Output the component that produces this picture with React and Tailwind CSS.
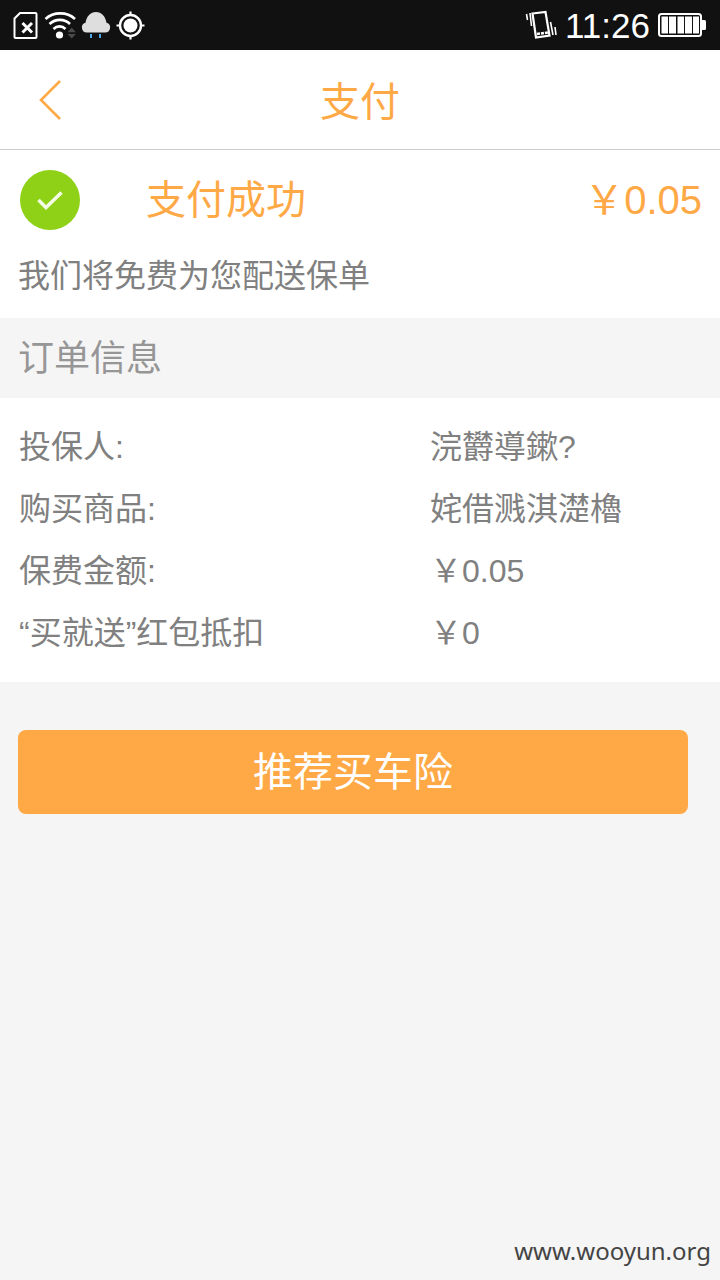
import React from "react";

function SimIcon() {
  return (
    <svg width="26" height="30" viewBox="0 0 26 30" fill="none">
      <path d="M8 3H23.500a1 1 0 0 1 1 1V27a1 1 0 0 1-1 1H3.500a1 1 0 0 1-1-1V8.500Z" stroke="#fff" strokeWidth="2" />
      <path d="M10.500 13l9.500 9.500M20 13l-9.500 9.500" stroke="#fff" strokeWidth="3" />
    </svg>
  );
}

function WifiIcon() {
  return (
    <svg width="34" height="30" viewBox="0 0 34 30" fill="none">
      <path d="M1.500 9C9.500 1.500 23 1.500 31 9" stroke="#fff" strokeWidth="2.600" />
      <path d="M5.500 14C11.500 8.500 20.500 8.500 26 14" stroke="#fff" strokeWidth="2.600" />
      <path d="M9.500 19C13 15.500 18 15.500 21.500 19" stroke="#fff" strokeWidth="2.600" />
      <circle cx="15.500" cy="25" r="3.600" fill="#fff" />
      <path d="M23.500 22.300L27.700 17.500l4.200 4.800ZM23.500 24h8.400l-4.200 4.500Z" fill="#4a4a4a" />
    </svg>
  );
}

function CloudIcon() {
  return (
    <svg width="34" height="30" viewBox="0 0 34 30">
      <path d="M8 22.500a5 5 0 0 1-1.500-9.800C7.500 6.500 11.500 2 17 2s9.500 4.500 10.500 10.700a5 5 0 0 1-1.500 9.800Z" fill="#dedede" />
      <path d="M11 24h2v4h-2ZM20 24h2v4h-2Z" fill="#4aa8e8" />
    </svg>
  );
}

function GpsIcon() {
  return (
    <svg width="32" height="30" viewBox="0 0 32 30" fill="none">
      <circle cx="16.500" cy="15.500" r="10.500" stroke="#fff" strokeWidth="2.400" />
      <circle cx="16.500" cy="15.500" r="7" fill="#fff" />
      <path d="M16.500 1.500v3M16.500 26.500v3M2.500 15.500h3M27.500 15.500h3" stroke="#fff" strokeWidth="2.200" />
    </svg>
  );
}

function VibrateIcon() {
  return (
    <svg width="34" height="32" viewBox="0 0 34 32" fill="none">
      <path d="M8.500 4.500l13-1.500 4 23.500-13.500 2Z" stroke="#fff" strokeWidth="2.200" />
      <path d="M13 25l11-1.500" stroke="#fff" strokeWidth="2.500" strokeDasharray="3 1" />
      <path d="M2.500 5l1 6M6 4l1.500 13M26.500 13l2.500 13M31 18l1 8" stroke="#fff" strokeWidth="1.600" />
    </svg>
  );
}

function BatteryIcon() {
  return (
    <svg width="50" height="28" viewBox="0 0 50 28" fill="none">
      <rect x="2" y="3" width="42" height="22" rx="2.500" stroke="#fff" strokeWidth="2" />
      <path d="M45 9h2.500a1.500 1.500 0 0 1 1.500 1.500v7a1.500 1.500 0 0 1-1.500 1.500H45Z" fill="#fff" />
      <path d="M4.500 5.500h6.500v17H4.500ZM12 5.500h7v17h-7ZM20.500 5.500h6.500v17h-6.500ZM28 5.500h7v17h-7ZM36 5.500h6v17h-6Z" fill="#fff" />
    </svg>
  );
}

const orders = [
  { label: "投保人:", value: "浣欝導鏉?" },
  { label: "购买商品:", value: "姹借溅淇濋櫓" },
  { label: "保费金额:", value: "￥0.05" },
  { label: "“买就送”红包抵扣", value: "￥0" },
];

export default function App() {
  return (
    <div
      className="w-[720px] h-[1280px] bg-[#f5f5f5] flex flex-col overflow-hidden"
      style={{ fontFamily: '"Liberation Sans", "Noto Sans CJK SC", sans-serif' }}
    >
      <div className="h-[50px] bg-[#111111] flex items-center justify-between pl-[12px] pr-[13px]">
        <div className="flex items-center">
          <SimIcon />
          <div className="ml-[6px]">
            <WifiIcon />
          </div>
          <div className="ml-[1px]">
            <CloudIcon />
          </div>
          <div className="ml-[1px]">
            <GpsIcon />
          </div>
        </div>
        <div className="flex items-center">
          <VibrateIcon />
          <span className="ml-[7px] mr-[7px] text-[35px] text-white leading-none">11:26</span>
          <BatteryIcon />
        </div>
      </div>

      <div className="h-[100px] pt-[4px] bg-white border-b border-[#cccccc] flex items-center justify-center relative">
        <svg className="absolute left-[38px] top-[29px]" width="26" height="42" viewBox="0 0 26 42" fill="none">
          <path d="M22 2L3 21l19 19" stroke="#ffa946" strokeWidth="2.600" />
        </svg>
        <span className="text-[40px] text-[#ffa946] leading-none">支付</span>
      </div>

      <div className="bg-white h-[168px] pl-[20px] pr-[18px] pt-[20px]">
        <div className="flex items-center h-[60px]">
          <div className="w-[60px] h-[60px] rounded-full bg-[#8fd116] flex items-center justify-center">
            <svg width="26" height="20" viewBox="0 0 26 20" fill="none">
              <path d="M1.500 10l7.500 7.500L24.500 2.500" stroke="#f4fbe6" strokeWidth="3.500" />
            </svg>
          </div>
          <span className="ml-[66px] text-[40px] text-[#ffa946] leading-none">支付成功</span>
          <span className="ml-auto text-[40px] text-[#ffa946] leading-none">￥0.05</span>
        </div>
        <p className="mt-[30px] -ml-[2px] text-[32px] text-[#808080] leading-none">我们将免费为您配送保单</p>
      </div>

      <div className="h-[80px] pt-[2px] flex items-center pl-[18px] text-[36px] text-[#969696]">订单信息</div>

      <div className="bg-white py-[18px]">
        {orders.map((row) => (
          <div key={row.label} className="h-[62px] flex items-center pl-[19px] text-[32px] text-[#808080]">
            <span className="w-[411px]">{row.label}</span>
            <span>{row.value}</span>
          </div>
        ))}
      </div>

      <button className="mt-[48px] ml-[18px] w-[670px] h-[84px] rounded-[8px] bg-[#ffa946] text-white text-[40px]">
        推荐买车险
      </button>

      <div className="mt-auto mb-[14px] pr-[9px] text-right text-[24px] leading-[30px] text-[#444444]" style={{ fontFamily: '"Noto Sans", sans-serif' }}>
        www.wooyun.org
      </div>
    </div>
  );
}
